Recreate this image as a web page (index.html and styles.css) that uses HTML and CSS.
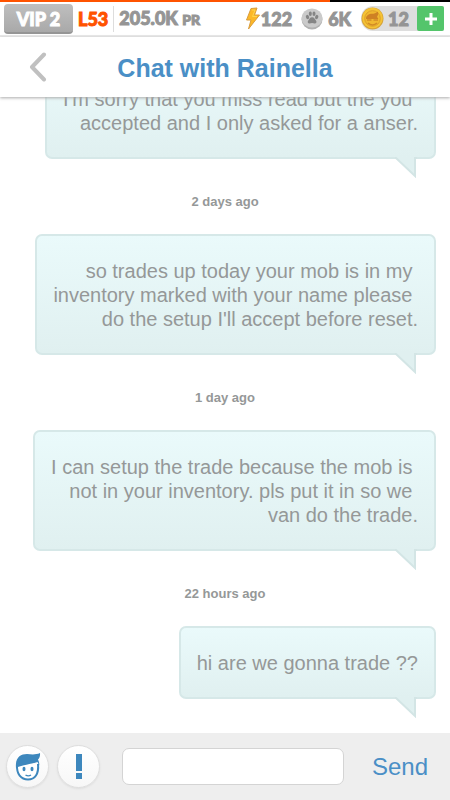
FILE: index.html
```html
<!DOCTYPE html>
<html lang="en">
<head>
<meta charset="utf-8">
<meta name="viewport" content="width=device-width, initial-scale=1">
<title>Chat with Rainella</title>
<link rel="stylesheet" href="styles.css">
</head>
<body>
<div class="progress"><div class="progress-fill"></div></div>
<div class="stats">
  <span class="vip">VIP 2</span>
  <span class="level">L53</span>
  <span class="rating">205.0K <small>PR</small></span>
  <span class="energy">
    <svg width="16" height="24" viewBox="0 0 16 24" aria-hidden="true"><path d="M6 1.5 12 1 9.5 8H14.500L3.500 22 6 13H1.500Z" fill="#fcb827" stroke="#d99c3d" stroke-linejoin="round"/><path d="M7 3h3L7.500 9.500H12" fill="none" stroke="#ffd54a"/></svg>
    <span>122</span>
  </span>
  <span class="paws">
    <svg width="22" height="22" viewBox="0 0 22 22" aria-hidden="true"><ellipse cx="11" cy="11.500" rx="10.500" ry="10" fill="#b1b1b1"/><ellipse cx="11" cy="10" rx="10.500" ry="9.500" fill="#cacaca"/><g fill="#858585"><ellipse cx="6.500" cy="9" rx="1.600" ry="2.200" transform="rotate(-20 6.500 9)"/><ellipse cx="9.300" cy="5.800" rx="1.500" ry="2.300"/><ellipse cx="13" cy="5.800" rx="1.500" ry="2.300"/><ellipse cx="15.700" cy="9" rx="1.600" ry="2.200" transform="rotate(20 15.700 9)"/><path d="M11.100 9.200c2.200 0 2.500 1.800 3.700 3 1.400 1.600.5 3.400-1.100 3.300-1-.1-1.700-.4-2.600-.4s-1.600.3-2.600.4c-1.600.1-2.500-1.700-1.100-3.300 1.200-1.200 1.500-3 3.700-3Z"/></g></svg>
    <span>6K</span>
  </span>
  <span class="coins">
    <svg width="23" height="23" viewBox="0 0 23 23" aria-hidden="true"><circle cx="11.500" cy="11.500" r="11" fill="#d5a23b"/><circle cx="11.500" cy="11" r="10.300" fill="#f5c334"/><circle cx="11.500" cy="11.500" r="7.800" fill="#f0b830" stroke="#dda02c"/><path d="M5 11.800C5 8.500 8 6.800 11 6.800c2 0 4-.8 6-2.300.5 2.500 0 4-1 5.200l1.400 2.300H5Z" fill="#ce8124"/><path d="M6 13h4.500M12.500 13H17M7 16c2.500 2.500 6.500 2.500 9 0" fill="none" stroke="#d18a26" stroke-width="1.500"/></svg>
    <span>12</span>
    <button class="add" aria-label="Add coins"><svg width="14" height="14" viewBox="0 0 14 14" aria-hidden="true"><path d="M7 1v12M1 7h12" stroke="#fff" stroke-width="3"/></svg></button>
  </span>
</div>
<header class="header">
  <button class="back" aria-label="Back"><svg width="18" height="30" viewBox="0 0 18 30" aria-hidden="true"><path d="M15 2.500 3 15l12 12.500" fill="none" stroke="#c0c0c0" stroke-width="4" stroke-linecap="round" stroke-linejoin="round"/></svg></button>
  <h1>Chat with Rainella</h1>
</header>
<main class="chat">
  <p class="bubble">I'm sorry that you miss read but the you&nbsp;<br>accepted and I only asked for a anser.<svg class="tail" width="22" height="21" viewBox="0 0 22 21" aria-hidden="true"><path d="M0 0h20v18.500Z" fill="#e0f0f0"/><path d="M0 1h1l19 18V1h2" fill="none" stroke="#d3e5e5" stroke-width="2"/></svg></p>
  <time class="stamp">2 days ago</time>
  <p class="bubble">so trades up today your mob is in my&nbsp;<br>inventory marked with your name please&nbsp;<br>do the setup I'll accept before reset.<svg class="tail" width="22" height="21" viewBox="0 0 22 21" aria-hidden="true"><path d="M0 0h20v18.500Z" fill="#e0f0f0"/><path d="M0 1h1l19 18V1h2" fill="none" stroke="#d3e5e5" stroke-width="2"/></svg></p>
  <time class="stamp">1 day ago</time>
  <p class="bubble">I can setup the trade because the mob is&nbsp;<br>not in your inventory. pls put it in so we&nbsp;<br>van do the trade.<svg class="tail" width="22" height="21" viewBox="0 0 22 21" aria-hidden="true"><path d="M0 0h20v18.500Z" fill="#e0f0f0"/><path d="M0 1h1l19 18V1h2" fill="none" stroke="#d3e5e5" stroke-width="2"/></svg></p>
  <time class="stamp">22 hours ago</time>
  <p class="bubble">hi are we gonna trade ??<svg class="tail" width="22" height="21" viewBox="0 0 22 21" aria-hidden="true"><path d="M0 0h20v18.500Z" fill="#e0f0f0"/><path d="M0 1h1l19 18V1h2" fill="none" stroke="#d3e5e5" stroke-width="2"/></svg></p>
</main>
<form class="composer">
  <button class="round" type="button" aria-label="Stickers"><svg width="26" height="28" viewBox="0 0 26 28" aria-hidden="true"><path d="M2 12c-.5 9 4 14.500 11 14.500S24 21 23 11" fill="#fff" stroke="#3d87bd" stroke-width="2"/><path d="M1 15C0 5 5 1 12 1c5 .5 9 .8 13-1 .3 3-.4 5-2 6.500 1 2 1.500 4 1.200 6L22.500 9C15 11.500 8 11.500 1 15Z" fill="#3d87bd"/><ellipse cx="9" cy="16" rx="1.500" ry="2.300" fill="#3d87bd"/><ellipse cx="17" cy="16" rx="1.500" ry="2.300" fill="#3d87bd"/><path d="M10.500 22q2.800 1.800 5.500 0" fill="none" stroke="#3d87bd" stroke-width="1.400"/></svg></button>
  <button class="round" type="button" aria-label="Alerts"><svg width="8" height="26" viewBox="0 0 8 26" aria-hidden="true"><path d="M1 0h6v17H1ZM1 19h6v6H1Z" fill="#3d87bd"/></svg></button>
  <input class="message" type="text" aria-label="Message">
  <button class="send" type="submit">Send</button>
</form>
</body>
</html>
```
FILE: styles.css
```css
* { box-sizing: border-box; }

body {
  margin: 0;
  height: 100vh;
  display: flex;
  flex-direction: column;
  background: #fff;
  color: #959898;
  font-family: "Liberation Sans", Arial, sans-serif;
}

button {
  border: 0;
  padding: 0;
  background: none;
  font: inherit;
  display: flex;
  align-items: center;
  justify-content: center;
}

svg { display: block; flex: none; }

.progress { height: 2px; background: #000; flex: none; }
.progress-fill { width: 73.33%; height: 100%; background: #ff5300; }

.stats {
  flex: none;
  height: 35px;
  display: flex;
  align-items: center;
  padding: 0 6px 0 4px;
  border-bottom: 2px solid #e8e8e8;
  color: #959595;
  font: 900 18px/24px Lato, sans-serif;
  -webkit-text-stroke: 1px currentColor;
  white-space: nowrap;
}
.vip {
  width: 69px;
  height: 30px;
  border-radius: 4px;
  background: linear-gradient(#bfbfbf, #a9a9a9);
  border-bottom: 2px solid #959595;
  color: #fff;
  line-height: 30px;
  text-align: center;
}
.level { margin-left: 5px; color: #ff5300; }
.rating { margin-left: 5px; padding-left: 5px; border-left: 1px solid #ddd; }
.rating small { font-size: 14px; }
.energy, .paws, .coins { display: flex; align-items: center; }
.energy { margin-left: auto; }
.paws { margin-left: 9px; gap: 5px; }
.coins {
  margin-left: 10px;
  height: 25px;
  gap: 4px;
  border-radius: 12px 2px 2px 12px;
  background: #dedede;
}
.add { width: 27px; height: 25px; margin-left: 4px; border-radius: 2px; background: #54c56b; }

.header {
  flex: none;
  height: 60px;
  display: grid;
  grid-template-columns: 76px 1fr 76px;
  align-items: center;
  position: relative;
  z-index: 1;
  background: #fff;
  box-shadow: 0 1px 3px #aaa;
}
.header h1 {
  margin: 0;
  padding-top: 2px;
  color: #4a8fc6;
  font-size: 25px;
  line-height: 30px;
  text-align: center;
  white-space: nowrap;
}
.back { height: 60px; }

.chat {
  flex: 1;
  min-height: 0;
  overflow: hidden;
  display: flex;
  flex-direction: column;
  justify-content: flex-end;
  align-items: flex-end;
  padding: 0 14px 34px;
}
.bubble {
  position: relative;
  flex: none;
  margin: 0;
  padding: 23px 16px 22px;
  border: 2px solid #d6e8e8;
  border-radius: 7px;
  background: linear-gradient(#eafafb, #e0f0f0);
  font-size: 20px;
  line-height: 24px;
  text-align: right;
}
.tail { position: absolute; right: 17px; top: 100%; }
.stamp {
  flex: none;
  align-self: center;
  margin: 35px 0 24px;
  font-size: 13px;
  font-weight: bold;
  line-height: 16px;
}

.composer {
  flex: none;
  height: 67px;
  display: flex;
  align-items: center;
  gap: 8px;
  padding: 0 14px 0 6px;
  background: #eee;
}
.round {
  flex: none;
  width: 43px;
  height: 43px;
  border: 1px solid #dedede;
  border-radius: 50%;
  background: linear-gradient(#fff, #f7f7f7);
  box-shadow: 0 1px 2px #ddd;
}
.message {
  flex: 1;
  min-width: 0;
  height: 37px;
  margin: 0 12px 0 14px;
  padding: 0 8px;
  border: 1px solid #d4d4d4;
  border-radius: 7px;
  background: #fff;
  font: 20px "Liberation Sans", Arial, sans-serif;
}
.send { width: 72px; height: 43px; color: #4a8fc6; font-size: 24px; }
```
